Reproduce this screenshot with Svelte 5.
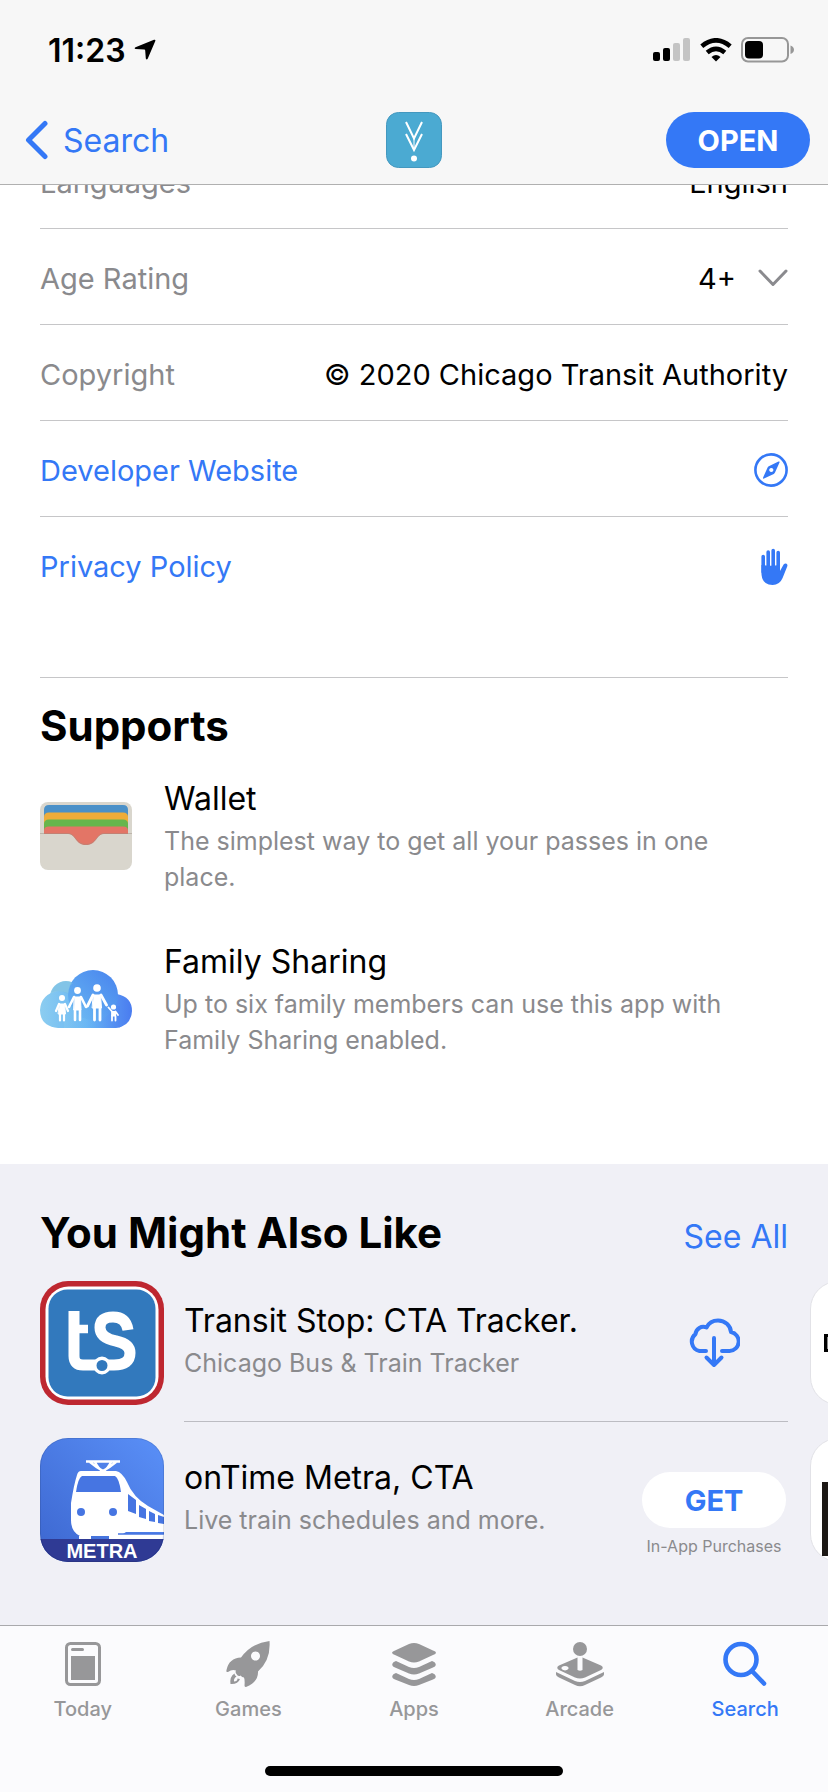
<script lang="ts">
  const info = [
    { label: 'Languages', value: 'English' },
    { label: 'Age Rating', value: '4+', expandable: true },
    { label: 'Copyright', value: '© 2020 Chicago Transit Authority' },
  ];

  const supports = [
    { id: 'wallet', title: 'Wallet', text: 'The simplest way to get all your passes in one place.' },
    { id: 'family', title: 'Family Sharing', text: 'Up to six family members can use this app with Family Sharing enabled.' },
  ];

  const tabs = ['Today', 'Games', 'Apps', 'Arcade', 'Search'];
  let activeTab = $state('Search');
</script>

<div class="page">
  <!-- Status bar + navigation -->
  <header class="top">
    <div class="status">
      <div class="clock">
        <span>11:23</span>
        <svg width="22" height="22" viewBox="0 0 22 22" aria-hidden="true">
          <path d="M20 .8 Q21.800 .3 21.300 2 L13.800 19.600 Q12.600 21.500 11.800 19.400 L11.200 11.400 Q11.100 10.600 10.300 10.500 L1.600 10 Q-.2 9.300 1.500 8.200Z" />
        </svg>
      </div>
      <div class="signals">
        <svg width="38" height="24" viewBox="0 0 38 24" aria-label="Signal">
          <rect x="0" y="14" width="7" height="9" rx="2" />
          <rect x="10" y="10" width="7" height="13" rx="2" />
          <rect x="20" y="5" width="7" height="18" rx="2" fill="#c4c4c4" />
          <rect x="30" y="0" width="7" height="23" rx="2" fill="#c4c4c4" />
        </svg>
        <svg width="32" height="24" viewBox="0 0 32 24" aria-label="Wi-Fi">
          <g fill="none" stroke="#000" stroke-width="4.600">
            <path d="M1.800 8.200 Q16 -3.600 30.200 8.200" />
            <path d="M7.200 14.600 Q16 7.200 24.800 14.600" />
          </g>
          <path d="M11.500 19 Q16 15.200 20.500 19 L16 23.600Z" />
        </svg>
        <svg width="53" height="26" viewBox="0 0 53 26" aria-label="Battery">
          <rect x="1" y="1" width="46" height="23.500" rx="6" fill="none" stroke="#979797" stroke-width="2" />
          <rect x="4" y="4" width="18" height="17.500" rx="4" />
          <path d="M49.500 8.500 Q53 10 53 12.800 Q53 15.600 49.500 17Z" fill="#979797" />
        </svg>
      </div>
    </div>

    <nav class="navbar">
      <a href="#search" class="back">
        <svg width="24" height="40" viewBox="0 0 24 40" aria-hidden="true">
          <path d="M21 3.500 L4.500 20 L21 36.500" fill="none" stroke="currentColor" stroke-width="5" stroke-linecap="round" stroke-linejoin="round" />
        </svg>
        Search
      </a>
      <svg class="app-mark" width="56" height="56" viewBox="0 0 56 56" aria-label="App icon">
        <rect x=".5" y=".5" width="55" height="55" rx="12" fill="#4baad2" stroke="#4498bf" />
        <g fill="none" stroke="#fff" stroke-width="2">
          <path d="M20 10 L28 26.500 L36 10" />
          <path d="M20 22 L28 38 L36 22" />
          <path d="M28 25 V36" stroke-width="1" />
        </g>
        <circle cx="28" cy="46.500" r="3" fill="#fff" />
      </svg>
      <button class="pill open">OPEN</button>
    </nav>
  </header>

  <main>
    <!-- Information -->
    <section class="info">
      {#each info as row}
        <div class="row">
          <span class="label">{row.label}</span>
          <span class="value">
            {row.value}
            {#if row.expandable}
              <button class="expand" aria-label="Show age rating details">
                <svg width="30" height="18" viewBox="0 0 30 18" aria-hidden="true">
                  <path d="M2 2 L15 15.500 L28 2" fill="none" stroke="#8a8a8e" stroke-width="3" stroke-linecap="round" stroke-linejoin="round" />
                </svg>
              </button>
            {/if}
          </span>
        </div>
      {/each}
      <a class="row" href="#website">
        Developer Website
        <svg width="34" height="34" viewBox="0 0 34 34" aria-hidden="true">
          <circle cx="17" cy="17" r="15.600" fill="none" stroke="currentColor" stroke-width="2.600" />
          <path fill="currentColor" fill-rule="evenodd" d="M24.500 8.500 Q26 8 25.500 9.500 L21 19.500 Q20.600 20.400 19.800 20.900 L10 25.600 Q8.600 26 9.100 24.500 L13.600 14.500 Q14 13.600 14.800 13.200Z M17.300 14.900 a2.100 2.100 0 1 0 .01 0Z" />
        </svg>
      </a>
      <a class="row" href="#privacy">
        Privacy Policy
        <svg width="28" height="38" viewBox="0 0 28 38" aria-hidden="true">
          <g stroke="currentColor" stroke-width="3.600" stroke-linecap="round">
            <path d="M3.200 8.500 V24 M8.200 4 V20 M13.200 2.500 V20 M18.200 4.500 V20" />
          </g>
          <path fill="currentColor" d="M1.400 17 Q10 18.500 20 17 V23 L23.600 16.600 Q25 15 26.600 15.800 Q27.900 16.600 27.200 18.500 L22.600 30 Q19.600 37 12.600 37 Q1.400 37 1.400 24Z" />
        </svg>
      </a>
    </section>

    <!-- Supports -->
    <section class="supports">
      <h2>Supports</h2>
      {#each supports as item}
        <article class="support">
          {#if item.id === 'wallet'}
            <svg width="92" height="68" viewBox="0 0 92 68" aria-hidden="true">
              <rect width="92" height="68" rx="8" fill="#d9d6cd" />
              <path d="M4 32 V8 Q4 3 9 3 H83 Q88 3 88 8 V32Z" fill="#4a90c8" />
              <path d="M4 32 V15 Q4 10.500 9 10.500 H83 Q88 10.500 88 15 V32Z" fill="#eeac3a" />
              <path d="M4 32 V22 Q4 17.500 9 17.500 H83 Q88 17.500 88 22 V32Z" fill="#66b64c" />
              <path d="M4 32 V28.500 Q4 24.500 9 24.500 H83 Q88 24.500 88 28.500 V32 H64 C56 32 57 43 46 43 C35 43 36 32 28 32Z" fill="#e37566" />
              <path d="M0 31.500 H28 C36 31.500 35 42.500 46 42.500 C57 42.500 56 31.500 64 31.500 H92" fill="none" stroke="#9b8f82" stroke-opacity=".45" />
            </svg>
          {:else}
            <svg width="92" height="58" viewBox="0 0 92 58" aria-hidden="true">
              <defs>
                <linearGradient id="cloud-base" x1="0" y1="0" x2="1" y2="0">
                  <stop offset="0" stop-color="#8ccdf0" />
                  <stop offset=".5" stop-color="#68b5f4" />
                  <stop offset="1" stop-color="#4a7cf0" />
                </linearGradient>
                <linearGradient id="cloud-top" x1="0" y1="1" x2="1" y2="0">
                  <stop offset="0" stop-color="#68b8f2" />
                  <stop offset="1" stop-color="#4883ee" />
                </linearGradient>
              </defs>
              <circle cx="26" cy="27" r="16" fill="#8ecbe8" />
              <path d="M18 58 Q0 56 0 40 Q1 24 18 21 Q28 21 34 27 L77 24 Q92 27 92 41 Q91 56 76 58Z" fill="url(#cloud-base)" />
              <circle cx="53" cy="25" r="25" fill="url(#cloud-top)" />
              <path d="M12 22 Q20 19 28 24 Q30 12 34 14 Q28 10 22 12 Q13 15 12 22Z" fill="#76bde6" opacity=".5" />
              <path d="M24 36 H80 V58 H24Z" fill="url(#cloud-base)" opacity=".35" />
              <g fill="#fff" stroke="#fff" stroke-linecap="round" stroke-linejoin="round">
                <circle cx="22" cy="28" r="3" stroke="none" />
                <path d="M19.500 34 H24.500 L25.500 44 H18.500Z" />
                <path d="M19 34 L16 41 M25 34 L28 41 M20 44 V50.500 M24 44 V50.500" stroke-width="2.200" />
                <circle cx="37.500" cy="20.500" r="3.400" stroke="none" />
                <path d="M34.500 27 H40.500 L41 40 H34Z" />
                <path d="M34 27 L29 37 M41 27 L46 37 M35 40 V50 M40 40 V50" stroke-width="2.600" />
                <circle cx="57" cy="18" r="3.800" stroke="none" />
                <path d="M53.500 25 H60.500 L61.500 38 H52.500Z" />
                <path d="M53 25 L47.500 36 M61 25 L66.500 35 M54.500 38 V50 M60 38 V50" stroke-width="2.800" />
                <circle cx="73.500" cy="37" r="2.600" stroke="none" />
                <path d="M72 41.500 H75.500 V46 H72Z" />
                <path d="M72 41.500 L68.500 37.500 M75.500 41.500 L78 45 M72 46 V50.500 M75.500 46 V50.500" stroke-width="1.800" />
              </g>
            </svg>
          {/if}
          <div>
            <h3>{item.title}</h3>
            <p>{item.text}</p>
          </div>
        </article>
      {/each}
    </section>

    <!-- You Might Also Like -->
    <section class="also">
      <div class="also-head">
        <h2>You Might Also Like</h2>
        <a href="#all">See All</a>
      </div>

      <div class="carousel">
        <div class="column">
          <article class="app">
            <svg class="app-icon" viewBox="0 0 124 124" aria-hidden="true">
              <rect width="124" height="124" rx="28" fill="#be2730" />
              <rect x="5.500" y="5.500" width="113" height="113" rx="23" fill="#fff" />
              <rect x="8.500" y="8.500" width="107" height="107" rx="19" fill="#3279bd" />
              <g fill="none" stroke="#fff" stroke-width="11">
                <path d="M34 30 V75 Q34 84 43 84 H74 Q90 84 90 72 Q90 63 76 60 Q60 57 60 46.500 Q60 36 73 36 Q86 36 88 49" />
                <path d="M37 48 H48" stroke-width="8.500" />
              </g>
              <circle cx="62" cy="84.500" r="7.200" fill="#3279bd" stroke="#fff" stroke-width="3.400" />
            </svg>
            <div class="app-body">
              <div class="app-text">
                <h3>Transit Stop: CTA Tracker.</h3>
                <p>Chicago Bus & Train Tracker</p>
              </div>
              <div class="action">
                <button class="download" aria-label="Download">
                  <svg width="52" height="50" viewBox="0 0 52 50" fill="none" stroke="currentColor" stroke-width="4" stroke-linecap="round" stroke-linejoin="round" aria-hidden="true">
                    <path d="M18 33 H11.500 A9.500 9.500 0 0 1 7.500 16.200 C8 10.500 13.500 7.500 18.500 9.500 C21 4.500 25.500 2.500 30 2.500 C37 2.500 42.500 7.500 43 14 A9.600 9.600 0 0 1 41.500 33 H34" />
                    <path d="M26 20 V47 M18.500 39.500 L26 47 L33.500 39.500" />
                  </svg>
                </button>
              </div>
            </div>
          </article>

          <article class="app">
            <svg class="app-icon" viewBox="0 0 124 124" aria-hidden="true">
              <defs>
                <linearGradient id="metra-bg" x1="1" y1="0" x2="0" y2="1">
                  <stop offset="0" stop-color="#5a90f8" />
                  <stop offset="1" stop-color="#3c66cf" />
                </linearGradient>
                <clipPath id="metra-clip"><rect width="124" height="124" rx="28" /></clipPath>
              </defs>
              <g clip-path="url(#metra-clip)">
                <rect width="124" height="124" fill="url(#metra-bg)" />
                <rect y="101" width="124" height="23" fill="#2f3a94" />
                <path d="M46 23.500 H80 M50 24 Q56 29 63 33 Q70 29 76 24 M55 24 Q58 31 63 33 Q68 31 71 24" fill="none" stroke="#fff" stroke-width="2.400" />
                <path d="M41 33 H76 Q82 34 87 44 Q93 59 108 68 L124 77 V94 H86 L80 98 H40 Q31 94 31 82 V65 Q34 46 37 37 Q38 33 41 33Z" fill="#fff" />
                <path d="M42 38 H75 Q79 40 81 54 H36 Q38 40 42 38Z" fill="#4675e2" />
                <path d="M88 56 L96 62 V76 L88 73Z M99 67 L106 71 V81 L99 79Z M109 73 L115 76 V84 L109 83Z M118 77 L124 79 V86 L118 85Z" fill="#4675e2" />
                <circle cx="41" cy="74" r="4" fill="#4675e2" />
                <circle cx="73" cy="74" r="4" fill="#4675e2" />
                <path d="M39 98 H51 V101 H39Z M69 96 H124 V101 H69Z" fill="#fff" />
                <path d="M78 96 H124" stroke="#4675e2" stroke-width="1.500" />
                <text x="62" y="120" text-anchor="middle" fill="#fff" font-family="Liberation Sans, Arial, sans-serif" font-size="20" font-weight="700">METRA</text>
              </g>
              <rect x=".5" y=".5" width="123" height="123" rx="27.500" fill="none" stroke="#000" stroke-opacity=".1" />
            </svg>
            <div class="app-body">
              <div class="app-text">
                <h3>onTime Metra, CTA</h3>
                <p>Live train schedules and more.</p>
              </div>
              <div class="action">
                <button class="pill get">GET</button>
                <small>In-App Purchases</small>
              </div>
            </div>
          </article>
        </div>

        <div class="column" aria-hidden="true">
          <div class="app">
            <svg class="app-icon" viewBox="0 0 124 124">
              <rect x=".5" y=".5" width="123" height="123" rx="27.500" fill="#fff" stroke="#e2e2e7" />
              <rect x="14" y="53" width="96" height="18" />
              <rect x="17" y="56" width="6" height="12" fill="#8c8c8c" />
            </svg>
          </div>
          <div class="app">
            <svg class="app-icon" viewBox="0 0 124 124">
              <rect x=".5" y=".5" width="123" height="123" rx="27.500" fill="#fff" stroke="#e2e2e7" />
              <rect x="12" y="44" width="100" height="74" fill="#1c1815" />
            </svg>
          </div>
        </div>
      </div>
    </section>
  </main>

  <!-- Tab bar -->
  <footer class="bottom">
    <nav class="tabs">
      {#each tabs as tab}
        <button class="tab" class:active={tab === activeTab} onclick={() => (activeTab = tab)}>
          <svg width="48" height="48" viewBox="0 0 48 48" fill="currentColor" aria-hidden="true">
            {#if tab === 'Today'}
              <rect x="7.500" y="3.500" width="33" height="41" rx="4" fill="none" stroke="currentColor" stroke-width="3" />
              <rect x="12" y="16" width="24" height="24" />
              <rect x="12" y="8" width="13" height="3" rx="1.500" />
            {:else if tab === 'Games'}
              <path fill-rule="evenodd" d="M45.500 1 Q47 20 34 31.500 Q34.500 42 22 47 Q20.500 47 20.500 45.500 Q21 40 20 37.500 Q18 37.500 16.500 35.500 Q14 37 12.500 34 Q11 32.500 12 30.500 Q8 29 4 32 Q2 32.500 2.500 30 Q5 18 17 17.500 Q27 3 45.500 1Z M31.500 11.500 a4.500 4.500 0 1 0 .01 0Z" />
              <path d="M10.500 33.500 Q5.500 36.500 6.500 44 Q14 44.500 16 39 Q14.500 38.500 13.500 38.500 Q13.500 41.500 10 41.500 Q9.500 38.500 12.500 36.500 Q10.500 35.500 10.500 33.500Z" />
            {:else if tab === 'Apps'}
              <path d="M2 12.500 Q2.500 11.500 5 10.500 L19 4 Q24 2 29 4 L43 10.500 Q46 11.500 46 12.800 Q46 14 43 15 L29 21.500 Q24 23.500 19 21.500 L5 15 Q2 14 2 12.500Z" />
              <path d="M2.200 25 Q2.200 22 6 21 L19 27 Q24 29 29 27 L42 21 Q45.800 22 45.800 25 Q45.500 26.500 43 27.500 L29 33.500 Q24 35.500 19 33.500 L5 27.500 Q2.500 26.500 2.200 25Z" />
              <path d="M2.200 37 Q2.200 34 6 33 L19 39 Q24 41 29 39 L42 33 Q45.800 34 45.800 37 Q45.500 38.500 43 39.500 L29 45 Q24 47 19 45 L5 39.500 Q2.500 38.500 2.200 37Z" />
            {:else if tab === 'Arcade'}
              <circle cx="24" cy="9" r="7" />
              <path fill-rule="evenodd" d="M21.500 17.500 V30 Q24 31.500 26.500 30 V17.500 L45 25.500 Q48.500 27.500 45 30 L29 37.500 Q24 39.500 19 37.500 L3 30 Q-.5 27.500 3 25.500Z M9 26 a3.500 2.200 0 1 0 .01 0Z" />
              <path d="M0 32 L19 41 Q24 43 29 41 L48 32 V34.500 Q48 36 45 37.500 L29 45 Q24 47.500 19 45 L3 37.500 Q0 36 0 34.500Z" />
            {:else}
              <g fill="none" stroke="currentColor" stroke-width="4.600" stroke-linecap="round">
                <circle cx="20" cy="19.500" r="15.500" />
                <path d="M31 31 L43 43.500" />
              </g>
            {/if}
          </svg>
          {tab}
        </button>
      {/each}
    </nav>
    <div class="home"></div>
  </footer>
</div>

<style>
  :global(body) { margin: 0; }

  .page {
    --blue: #3478f6;
    --grey: #8a8a8d;
    --line: #c6c6c8;
    min-height: 100vh;
    display: flex; flex-direction: column;
    background: #fff; color: #000;
    font-family: Inter, 'Liberation Sans', sans-serif;
    font-size: 29px;
  }

  svg { display: block; flex-shrink: 0; }
  h2, h3, p { margin: 0; }
  a { color: var(--blue); text-decoration: none; }

  button {
    padding: 0; border: 0; background: none;
    font: inherit; color: var(--blue); cursor: pointer;
  }

  h2 { font-size: 42px; line-height: 52px; font-weight: 700; }
  h3 { font-size: 32px; line-height: 44px; font-weight: 400; margin-bottom: 2px; }
  p  { font-size: 25px; line-height: 36px; color: var(--grey); }

  .pill {
    width: 144px; height: 56px; border-radius: 28px;
    font-size: 29px; font-weight: 700;
  }

  /* Header */
  .top {
    position: sticky; top: 0; z-index: 2;
    background: #f7f7f7;
    border-bottom: 1px solid #b0b0b0;
  }

  .status {
    display: flex; align-items: center; justify-content: space-between;
    height: 100px; padding: 0 34px 0 48px;
  }

  .clock {
    display: flex; align-items: center; gap: 8px;
    font-size: 32px; font-weight: 600;
  }

  .signals { display: flex; align-items: center; gap: 9px; }

  .navbar {
    display: grid; grid-template-columns: 1fr auto 1fr;
    align-items: center;
    height: 56px; padding: 12px 18px 16px;
  }

  .back {
    display: flex; align-items: center; gap: 15px;
    padding-left: 6px;
    font-size: 32px;
  }

  .open { justify-self: end; background: var(--blue); color: #fff; }

  /* Information, scrolled partly under the header */
  .info { margin: -52px 40px 0; }

  .row {
    display: flex; align-items: center; justify-content: space-between;
    box-sizing: border-box; height: 96px; padding-top: 3px;
    border-bottom: 1px solid var(--line);
  }
  .row:last-child { border-bottom: 0; }

  .label { color: var(--grey); }
  .value { display: flex; align-items: center; gap: 22px; }

  /* Supports */
  .supports {
    margin: 64px 40px 0; padding: 22px 0 86px;
    border-top: 1px solid var(--line);
  }

  .support {
    display: flex; align-items: center; gap: 32px;
    padding: 25px 40px 20px 0;
  }

  /* You Might Also Like */
  .also { background: #f0f0f6; padding: 43px 0 63px; overflow: hidden; }

  .also-head {
    display: flex; align-items: baseline; justify-content: space-between;
    padding: 0 40px 18px;
  }
  .also-head a { font-size: 32px; line-height: 52px; }

  .carousel { display: flex; gap: 22px; padding: 0 40px; }

  .column {
    display: flex; flex-direction: column; gap: 33px;
    flex: 0 0 100%;
  }

  .app { display: flex; align-items: center; gap: 20px; }
  .app-icon { width: 124px; height: 124px; }

  .app-body {
    position: relative;
    flex: 1; align-self: stretch;
    display: flex; align-items: center; justify-content: space-between;
  }

  .app-text { padding-bottom: 6px; }

  .app:first-child .app-body::after {
    content: '';
    position: absolute; left: 0; right: 0; bottom: -17px;
    border-bottom: 1px solid #bcbcc2;
  }

  .action {
    display: flex; flex-direction: column; align-items: center; gap: 8px;
    width: 148px;
  }
  .action small { font-size: 16px; line-height: 20px; color: var(--grey); white-space: nowrap; }

  /* keeps the button centred on the icon with the note below it */
  .action:has(small) { padding-top: 28px; }

  .get { background: #fff; }

  /* Tab bar */
  .bottom {
    position: sticky; bottom: 0; z-index: 2;
    margin-top: auto; padding-bottom: 16px;
    background: #fbfbfd;
    border-top: 1px solid #a9a9ac;
  }

  .tabs { display: flex; height: 140px; }

  .tab {
    flex: 1;
    display: flex; flex-direction: column; align-items: center; gap: 8px;
    padding-top: 14px;
    font-size: 20px; line-height: 26px; font-weight: 500;
    color: #979799;
  }
  .tab.active { color: var(--blue); }

  .home {
    width: 36%; height: 10px; margin: 0 auto;
    border-radius: 5px; background: #000;
  }
</style>
